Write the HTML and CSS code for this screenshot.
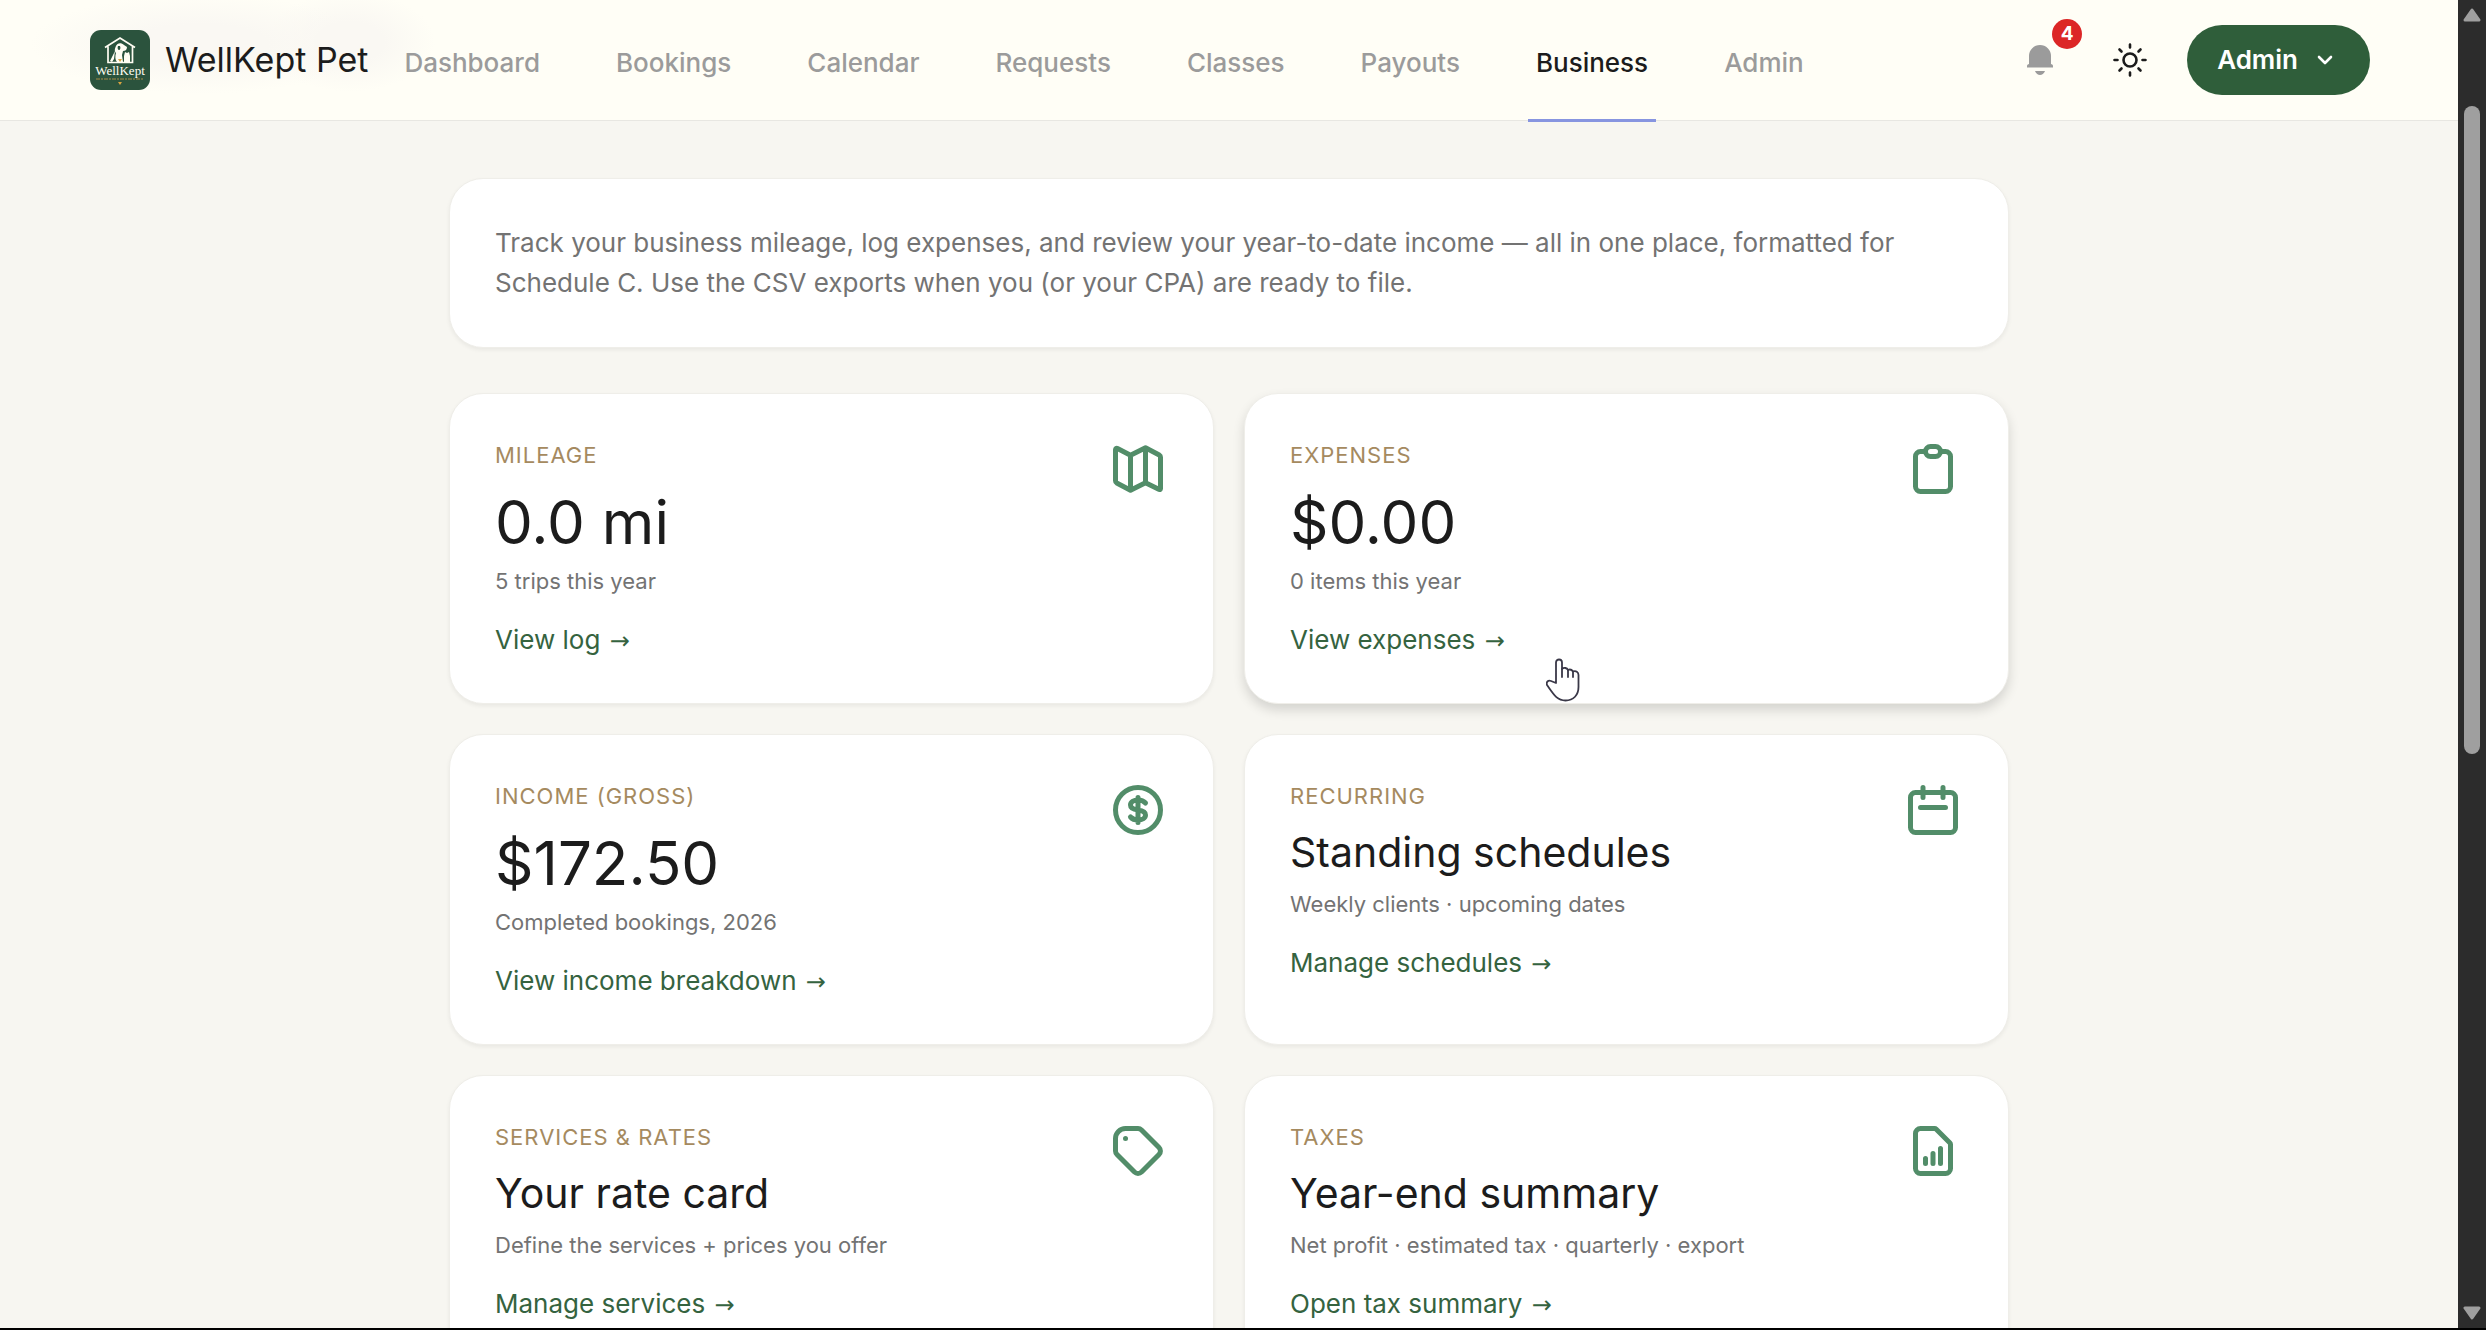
FILE: index.html
```html
<!DOCTYPE html>
<html lang="en">
<head>
  <meta charset="UTF-8" />
  <meta name="viewport" content="width=device-width, initial-scale=1" />
  <title>Business - WellKept Pet</title>
  <link rel="stylesheet" href="styles.css">
</head>
<body>

<div class="page">

<!-- Header -->
<header>
  <a class="brand" href="#">
    <svg class="logo" viewBox="0 0 60 60" aria-hidden="true">
      <rect width="60" height="60" rx="11" fill="#2b533d"/>
      <path d="M15 17.500L30 8l15 9.500M18 16.500V32.500h24.500V16.500" fill="none" stroke="#fffdf3" stroke-width="1.700"/>
      <path d="M26 16c1-3 5-4 8-1l3 2c0 3-2 4-4 4l-1 4 1 7h-6c-2-2-2-6-1-9-2-2-1-5 0-7z" fill="#fffdf3"/>
      <path d="M28 16c-1 2 0 4 1 4s2-2 1-4z" fill="#2b533d"/>
      <path d="M34 31v-5l1-4 2 1 2-1 1 4v6h-6zM20 31l5-10-1 8-2 3z" fill="#fffdf3"/>
      <path d="M28 29h4l-2 3z" fill="#d9a441"/>
      <text x="30" y="45" text-anchor="middle">WellKept</text>
      <path d="M6 49h48" stroke="#a58b48" stroke-width="1" stroke-dasharray="4 1 2 1"/>
      <path d="M28 52h4l-2 3z" fill="#d9a441"/>
    </svg>
    <span>WellKept Pet</span>
  </a>
  <nav>
    <a href="#">Dashboard</a>
    <a href="#">Bookings</a>
    <a href="#">Calendar</a>
    <a href="#">Requests</a>
    <a href="#">Classes</a>
    <a href="#">Payouts</a>
    <a href="#" class="active" aria-current="page">Business</a>
    <a href="#">Admin</a>
  </nav>
  <div class="tools">
    <button class="icon-btn bell" aria-label="Notifications">
      <svg viewBox="0 0 26 30" width="26" height="30" fill="#9b9b9b">
        <path d="M2 11a11 11 0 0 1 22 0v8c2 .5 2 1 2 3.500H0C0 20 0 19.500 2 19z"/>
        <path d="M8 26h10c-1 2.500-3 4-5 4s-4-1.500-5-4z"/>
      </svg>
      <span class="badge">4</span>
    </button>
    <button class="icon-btn" aria-label="Toggle theme">
      <svg viewBox="0 0 34 34" width="34" height="34" fill="none" stroke="#1c1c1c" stroke-width="2.600" stroke-linecap="round">
        <circle cx="17" cy="17" r="6.500"/>
        <path d="M17 1.500v3M17 29.500v3M1.500 17h3M29.500 17h3M6.500 6.500l2 2M25.500 25.500l2 2M6.500 27.500l2-2M25.500 8.500l2-2"/>
      </svg>
    </button>
    <button class="account">
      Admin
      <svg viewBox="0 0 30 30" width="30" height="30" fill="none" stroke="#fff" stroke-width="2.600" stroke-linecap="round" stroke-linejoin="round"><path d="M9 12l6 6 6-6"/></svg>
    </button>
  </div>
</header>

<!-- Business overview -->
<main>
  <section class="card intro">
    <p>Track your business mileage, log expenses, and review your year-to-date income — all in one place, formatted for Schedule C. Use the CSV exports when you (or your CPA) are ready to file.</p>
  </section>

  <section class="grid">
    <article class="card">
      <div>
        <h2>Mileage</h2>
        <p class="amount">0.0 mi</p>
        <p class="note">5 trips this year</p>
        <a href="#">View log <span class="arrow">→</span></a>
      </div>
      <svg class="icon" viewBox="0 0 24 24"><path d="M3 4.300v12.400c0 .4.200.7.500.9l5.500 2.900 6-3 5.500 2.700c.3.100.500 0 .5-.4V7.300c0-.4-.200-.7-.500-.9L15 3.500l-6 3-5.200-2.700c-.4-.2-.8 0-.8.500zM9 6.500v14M15 3.500v14"/></svg>
    </article>

    <article class="card hovered">
      <div>
        <h2>Expenses</h2>
        <p class="amount">$0.00</p>
        <p class="note">0 items this year</p>
        <a href="#">View expenses <span class="arrow">→</span></a>
      </div>
      <svg class="icon" viewBox="0 0 24 24"><path d="M9 5H7a2 2 0 0 0-2 2v12a2 2 0 0 0 2 2h10a2 2 0 0 0 2-2V7a2 2 0 0 0-2-2h-2"/><rect x="9" y="3" width="6" height="4" rx="2"/></svg>
      <svg class="pointer" viewBox="0 0 34 44" width="34" height="44" fill="#fff" stroke="#3a3848" stroke-width="1.800" stroke-linejoin="round" stroke-linecap="round">
        <path d="M10 25V4.500C10 .5 16 .5 16 4.500V11c2-2 5-1 6 1 2-1 4 0 5 1.500 3-1 5.500.5 5.500 3.500v12c0 8-5 13.500-13 13.500C11 42.500 8 37 1 27c-1-3 1-5 4-4z"/>
        <path d="M16 11v8M22 12v7M27 13.500V19" fill="none"/>
      </svg>
    </article>

    <article class="card">
      <div>
        <h2>Income (gross)</h2>
        <p class="amount">$172.50</p>
        <p class="note">Completed bookings, 2026</p>
        <a href="#">View income breakdown <span class="arrow">→</span></a>
      </div>
      <svg class="icon" viewBox="0 0 24 24"><circle cx="12" cy="12" r="9"/><path d="M15 9.200C14.300 8.400 13.300 8 12 8c-1.700 0-3 .8-3 2s1.300 1.800 3 2 3 .8 3 2-1.300 2-3 2c-1.300 0-2.300-.4-3-1.200M12 7v10"/></svg>
    </article>

    <article class="card">
      <div>
        <h2>Recurring</h2>
        <p class="title">Standing schedules</p>
        <p class="note">Weekly clients · upcoming dates</p>
        <a href="#">Manage schedules <span class="arrow">→</span></a>
      </div>
      <svg class="icon" viewBox="0 0 24 24"><rect x="3" y="5" width="18" height="16" rx="2"/><path d="M8 3v4M16 3v4M7 11h10"/></svg>
    </article>

    <article class="card">
      <div>
        <h2>Services &amp; rates</h2>
        <p class="title">Your rate card</p>
        <p class="note">Define the services + prices you offer</p>
        <a href="#">Manage services <span class="arrow">→</span></a>
      </div>
      <svg class="icon" viewBox="0 0 24 24"><path d="M7 7h.01M7 3h5c.500 0 1 .2 1.400.6l7 7a2 2 0 0 1 0 2.800l-7 7a2 2 0 0 1-2.800 0l-7-7A2 2 0 0 1 3 12V7a4 4 0 0 1 4-4z"/></svg>
    </article>

    <article class="card">
      <div>
        <h2>Taxes</h2>
        <p class="title">Year-end summary</p>
        <p class="note">Net profit · estimated tax · quarterly · export</p>
        <a href="#">Open tax summary <span class="arrow">→</span></a>
      </div>
      <svg class="icon" viewBox="0 0 24 24"><path d="M9 17v-2M12 17v-4M15 17v-6M17 21H7a2 2 0 0 1-2-2V5a2 2 0 0 1 2-2h5.600c.3 0 .5.100.7.300l5.400 5.400c.2.200.3.400.3.700V19a2 2 0 0 1-2 2z"/></svg>
    </article>
  </section>
</main>

</div>

<!-- Scrollbar -->
<aside class="scrollbar" aria-hidden="true">
  <svg viewBox="0 0 18 14" width="18" height="14"><path d="M9 2l7 10H2z"/></svg>
  <div class="track"><div class="thumb"></div></div>
  <svg viewBox="0 0 18 14" width="18" height="14"><path d="M9 12L2 2h14z"/></svg>
</aside>

</body>
</html>
```
FILE: styles.css
```css
* {
  box-sizing: border-box;
}

body {
  margin: 0;
  height: 100vh;
  display: flex;
  overflow: hidden;
  border-bottom: 2px solid #000;
  font-family: Inter, 'Liberation Sans', sans-serif;
  font-size: 26px;
  line-height: 40px;
  background-color: #f7f6f1;
  color: #1c1c1c;
}

h2, p {
  margin: 0;
  font-weight: 400;
}

a {
  color: inherit;
  text-decoration: none;
}

button {
  border: none;
  background: none;
  padding: 0;
  font: inherit;
  cursor: pointer;
}

.page {
  flex: 1;
  min-width: 0;
  overflow: hidden;
}

header {
  height: 121px;
  padding: 0 88px 0 90px;
  display: flex;
  align-items: center;
  gap: 28px;
  background:
    radial-gradient(ellipse 170px 50px at 200px 44px, #faf8f3 40%, transparent),
    radial-gradient(ellipse 85px 50px at 350px 42px, #faf8f3 40%, transparent),
    #fffef6;
  border-bottom: 1px solid #e8e7e2;
}

.brand {
  display: flex;
  align-items: center;
  gap: 15px;
  font-size: 34px;
  white-space: nowrap;
}

.logo {
  width: 60px;
  height: 60px;
}

.logo text {
  font-family: 'Liberation Serif', serif;
  font-size: 13px;
  fill: #fffdf3;
}

nav {
  flex: 1;
  align-self: stretch;
  display: flex;
  gap: 60px;
}

nav a {
  display: flex;
  align-items: center;
  padding: 6px 8px 0;
  margin-bottom: -2px;
  border-bottom: 3px solid transparent;
  color: #9b9b9b;
  font-weight: 500;
}

nav a.active {
  color: #1c1c1c;
  border-color: #8795e0;
}

.tools {
  display: flex;
  align-items: center;
  gap: 24px;
}

.icon-btn {
  position: relative;
  width: 66px;
  height: 60px;
  display: flex;
  align-items: center;
  justify-content: center;
}

.badge {
  position: absolute;
  top: -11px;
  right: -9px;
  width: 30px;
  height: 30px;
  border-radius: 50%;
  background-color: #dc2626;
  color: white;
  font-size: 19px;
  font-weight: 700;
  line-height: 30px;
  text-align: center;
}

.account {
  display: flex;
  align-items: center;
  gap: 12px;
  height: 70px;
  padding: 0 30px;
  border-radius: 35px;
  background-color: #2f5e3a;
  color: white;
  font-weight: 600;
}

main {
  max-width: 1560px;
  margin: 0 auto;
  padding: 57px 0;
}

.card {
  position: relative;
  display: flex;
  align-items: flex-start;
  justify-content: space-between;
  padding: 44px 45px;
  background-color: white;
  border: 1px solid #efeee9;
  border-radius: 34px;
  box-shadow: 0 2px 4px rgba(0,0,0,0.06);
}

.card.hovered {
  box-shadow: 0 6px 12px rgba(0,0,0,0.14);
}

.intro {
  margin-bottom: 45px;
  color: #737373;
}

.grid {
  display: grid;
  grid-template-columns: 1fr 1fr;
  gap: 30px;
}

.card h2 {
  font-size: 22px;
  line-height: 34px;
  letter-spacing: 1px;
  text-transform: uppercase;
  color: #a58a5f;
}

.amount {
  margin-top: 8px;
  font-size: 60px;
  line-height: 84px;
}

.title {
  margin: 8px 0 4px;
  font-size: 41px;
  line-height: 62px;
}

.note {
  margin-bottom: 22px;
  font-size: 22px;
  line-height: 34px;
  color: #737373;
}

.card a {
  display: block;
  line-height: 39px;
  color: #35633f;
}

.arrow {
  margin-left: 2px;
  font-family: 'DejaVu Sans', sans-serif;
  font-size: 24px;
  line-height: 1;
}

.icon {
  width: 60px;
  height: 60px;
  margin-top: 1px;
  fill: none;
  stroke: #528d69;
  stroke-width: 2;
  stroke-linecap: round;
  stroke-linejoin: round;
}

.pointer {
  position: absolute;
  left: 301px;
  bottom: 1px;
}

.scrollbar {
  width: 28px;
  display: flex;
  flex-direction: column;
  align-items: center;
  padding: 8px 0;
  background-color: #2c2c2c;
}

.scrollbar svg {
  fill: #9f9f9f;
  stroke: #9f9f9f;
  stroke-width: 3;
  stroke-linejoin: round;
}

.track {
  flex: 1;
  padding-top: 84px;
}

.thumb {
  width: 16px;
  height: 54%;
  border-radius: 8px;
  background-color: #9f9f9f;
}
```
